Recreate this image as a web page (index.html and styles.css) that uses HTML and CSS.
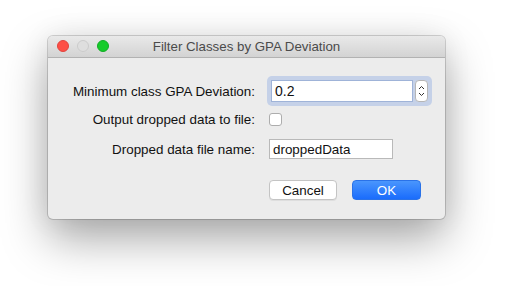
FILE: index.html
```html
<!DOCTYPE html>
<html>
  <head>
    <meta charset="utf-8" />
    <title>Filter Classes by GPA Deviation</title>
    <link rel="stylesheet" href="styles.css">
  </head>
  <body>
    <div class="window">
      <div class="titlebar">
        <div class="lights">
          <span class="light close"></span>
          <span class="light minimize"></span>
          <span class="light zoom"></span>
        </div>
        <div class="title">Filter Classes by GPA Deviation</div>
      </div>

      <div class="content">
        <div class="form">
          <label class="label">Minimum class GPA Deviation:</label>
          <div class="spinner">
            <input class="field spin-field" type="text" value="0.2" />
            <div class="stepper">
              <svg width="7" height="16" viewBox="0 0 7 16">
                <path d="M1 6 L3.5 3.5 L6 6" fill="none" stroke="#333" stroke-width="1" />
                <path d="M1 10 L3.5 12.5 L6 10" fill="none" stroke="#333" stroke-width="1" />
              </svg>
            </div>
          </div>

          <label class="label row2">Output dropped data to file:</label>
          <div class="checkbox-cell"><span class="checkbox"></span></div>

          <label class="label">Dropped data file name:</label>
          <input class="field name-field" type="text" value="droppedData" />
        </div>

        <div class="buttons">
          <button class="btn cancel">Cancel</button>
          <button class="btn ok">OK</button>
        </div>
      </div>
    </div>
  </body>
</html>
```

FILE: styles.css
```css
html,
body {
  margin: 0;
  height: 100%;
  background: #ffffff;
}

body {
  box-sizing: border-box;
  padding: 36px 0 0 48px;
  font-family: "Liberation Sans", Arial, sans-serif;
  font-size: 13.4px;
  color: #111;
}

.window {
  width: 397px;
  background: #ececec;
  border-radius: 5px;
  box-shadow: 0 0 0 1px rgba(0, 0, 0, 0.16), 0 20px 46px rgba(0, 0, 0, 0.34),
    0 0 30px rgba(0, 0, 0, 0.07);
  overflow: hidden;
}

.titlebar {
  position: relative;
  height: 21px;
  background: linear-gradient(#e9e9e9, #d3d3d3);
  border-bottom: 1px solid #b2b2b2;
  display: flex;
  align-items: center;
  justify-content: center;
}

.lights {
  position: absolute;
  left: 9px;
  top: 4px;
  display: flex;
  gap: 8px;
}

.light {
  width: 12px;
  height: 12px;
  border-radius: 50%;
  box-sizing: border-box;
}

.close {
  background: #fe4f46;
  border: 1px solid #e0443e;
}

.minimize {
  background: #dedede;
  border: 1px solid #cbcbcb;
}

.zoom {
  background: #16cc2a;
  border: 1px solid #12ac26;
}

.title {
  color: #4b4b4b;
  font-size: 13.3px;
}

.content {
  padding: 18px 24px 19px 20px;
}

.form {
  display: grid;
  grid-template-columns: 187px auto;
  grid-template-rows: 30px 31px 20px;
  column-gap: 14px;
  row-gap: 1px;
  align-items: center;
}

.label {
  text-align: right;
}

.label.row2 {
  align-self: start;
  padding-top: 5px;
}

.spinner {
  margin-left: -2px;
  width: 165px;
  height: 30px;
  box-sizing: border-box;
  padding: 4px;
  background: #c5d1e8;
  border-radius: 5px;
  display: flex;
  gap: 2px;
}

.field {
  font-family: "Liberation Sans", Arial, sans-serif;
  font-size: 13.4px;
  color: #111;
  background: #fff;
  border: 1px solid #b9b9b9;
  box-sizing: border-box;
  padding: 0 3px;
  margin: 0;
  outline: none;
}

.spin-field {
  width: 142px;
  height: 22px;
  font-size: 14px;
  border-color: #9fb3d8;
}

.stepper {
  width: 13px;
  height: 22px;
  box-sizing: border-box;
  background: #fff;
  border: 1px solid #b6b6b6;
  border-radius: 4px;
  display: flex;
  align-items: center;
  justify-content: center;
}

.checkbox-cell {
  align-self: start;
  padding-top: 6px;
}

.checkbox {
  display: block;
  width: 13px;
  height: 13px;
  box-sizing: border-box;
  background: #fff;
  border: 1px solid #adadad;
  border-radius: 3px;
}

.name-field {
  width: 124px;
  height: 20px;
}

.buttons {
  margin-top: 21px;
  display: flex;
  justify-content: flex-end;
  gap: 15px;
}

.btn {
  font-family: "Liberation Sans", Arial, sans-serif;
  font-size: 13.4px;
  height: 20px;
  width: 68px;
  padding: 0;
  border-radius: 4px;
  box-sizing: border-box;
}

.cancel {
  background: #ffffff;
  color: #111;
  border: 1px solid #c4c4c4;
  box-shadow: 0 1px 0 rgba(0, 0, 0, 0.06);
}

.ok {
  width: 69px;
  color: #ffffff;
  background: linear-gradient(#4a96fd, #1a6cfc);
  border: 1px solid #2a72e8;
}
```
